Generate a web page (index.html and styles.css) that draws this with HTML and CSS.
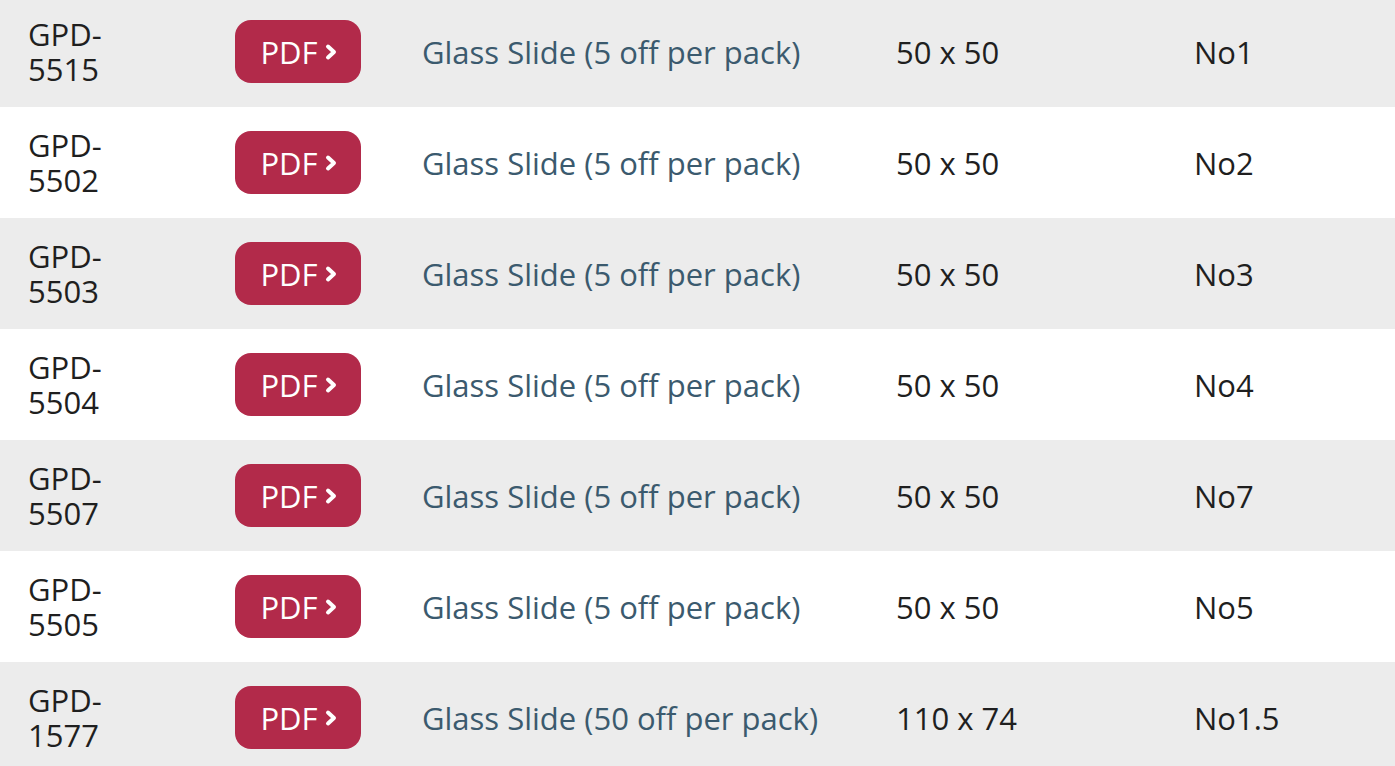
FILE: index.html
```html
<!DOCTYPE html>
<html lang="en">
<head>
<meta charset="utf-8">
<title>Glass Slides</title>
<link rel="stylesheet" href="styles.css">
</head>
<body>
<div class="table">
  <div class="row alt">
    <div class="code">GPD-<br>5515</div>
    <div class="cell"><a class="pdf" href="#">PDF<svg class="chev" viewBox="0 0 14 18"><path d="M4 3.5 L10 9 L4 14.5" /></svg></a></div>
    <div class="desc">Glass Slide (5 off per pack)</div>
    <div class="dim">50 x 50</div>
    <div class="dim">No1</div>
  </div>
  <div class="row">
    <div class="code">GPD-<br>5502</div>
    <div class="cell"><a class="pdf" href="#">PDF<svg class="chev" viewBox="0 0 14 18"><path d="M4 3.5 L10 9 L4 14.5" /></svg></a></div>
    <div class="desc">Glass Slide (5 off per pack)</div>
    <div class="dim">50 x 50</div>
    <div class="dim">No2</div>
  </div>
  <div class="row alt">
    <div class="code">GPD-<br>5503</div>
    <div class="cell"><a class="pdf" href="#">PDF<svg class="chev" viewBox="0 0 14 18"><path d="M4 3.5 L10 9 L4 14.5" /></svg></a></div>
    <div class="desc">Glass Slide (5 off per pack)</div>
    <div class="dim">50 x 50</div>
    <div class="dim">No3</div>
  </div>
  <div class="row">
    <div class="code">GPD-<br>5504</div>
    <div class="cell"><a class="pdf" href="#">PDF<svg class="chev" viewBox="0 0 14 18"><path d="M4 3.5 L10 9 L4 14.5" /></svg></a></div>
    <div class="desc">Glass Slide (5 off per pack)</div>
    <div class="dim">50 x 50</div>
    <div class="dim">No4</div>
  </div>
  <div class="row alt">
    <div class="code">GPD-<br>5507</div>
    <div class="cell"><a class="pdf" href="#">PDF<svg class="chev" viewBox="0 0 14 18"><path d="M4 3.5 L10 9 L4 14.5" /></svg></a></div>
    <div class="desc">Glass Slide (5 off per pack)</div>
    <div class="dim">50 x 50</div>
    <div class="dim">No7</div>
  </div>
  <div class="row">
    <div class="code">GPD-<br>5505</div>
    <div class="cell"><a class="pdf" href="#">PDF<svg class="chev" viewBox="0 0 14 18"><path d="M4 3.5 L10 9 L4 14.5" /></svg></a></div>
    <div class="desc">Glass Slide (5 off per pack)</div>
    <div class="dim">50 x 50</div>
    <div class="dim">No5</div>
  </div>
  <div class="row alt">
    <div class="code">GPD-<br>1577</div>
    <div class="cell"><a class="pdf" href="#">PDF<svg class="chev" viewBox="0 0 14 18"><path d="M4 3.5 L10 9 L4 14.5" /></svg></a></div>
    <div class="desc">Glass Slide (50 off per pack)</div>
    <div class="dim">110 x 74</div>
    <div class="dim">No1.5</div>
  </div>
</div>
</body>
</html>
```
FILE: styles.css
```css
html, body {
  margin: 0;
  padding: 0;
  background: #ffffff;
  overflow: hidden;
}
body {
  font-family: "Open Sans", "Noto Sans", sans-serif;
  font-size: 31px;
  color: #1f1f1f;
}
.table {
  margin-top: -4px;
}
.row {
  display: grid;
  grid-template-columns: 207px 187px 474px 298px 1fr;
  align-items: center;
  height: 111px;
  padding-left: 28px;
  box-sizing: border-box;
  background: #ffffff;
}
.row.alt {
  background: #ececec;
}
.code {
  line-height: 35px;
}
.pdf {
  display: inline-flex;
  align-items: center;
  justify-content: center;
  gap: 6px;
  width: 126px;
  height: 63px;
  border-radius: 16px;
  background: #b22a4a;
  color: #ffffff;
  text-decoration: none;
  box-sizing: border-box;
  padding-left: 2px;
}
.chev {
  width: 14px;
  height: 18px;
  fill: none;
  stroke: #ffffff;
  stroke-width: 4;
  stroke-linecap: round;
  stroke-linejoin: round;
}
.desc {
  color: #3b5a6e;
}
.dim {
  color: #1f1f1f;
}
```
